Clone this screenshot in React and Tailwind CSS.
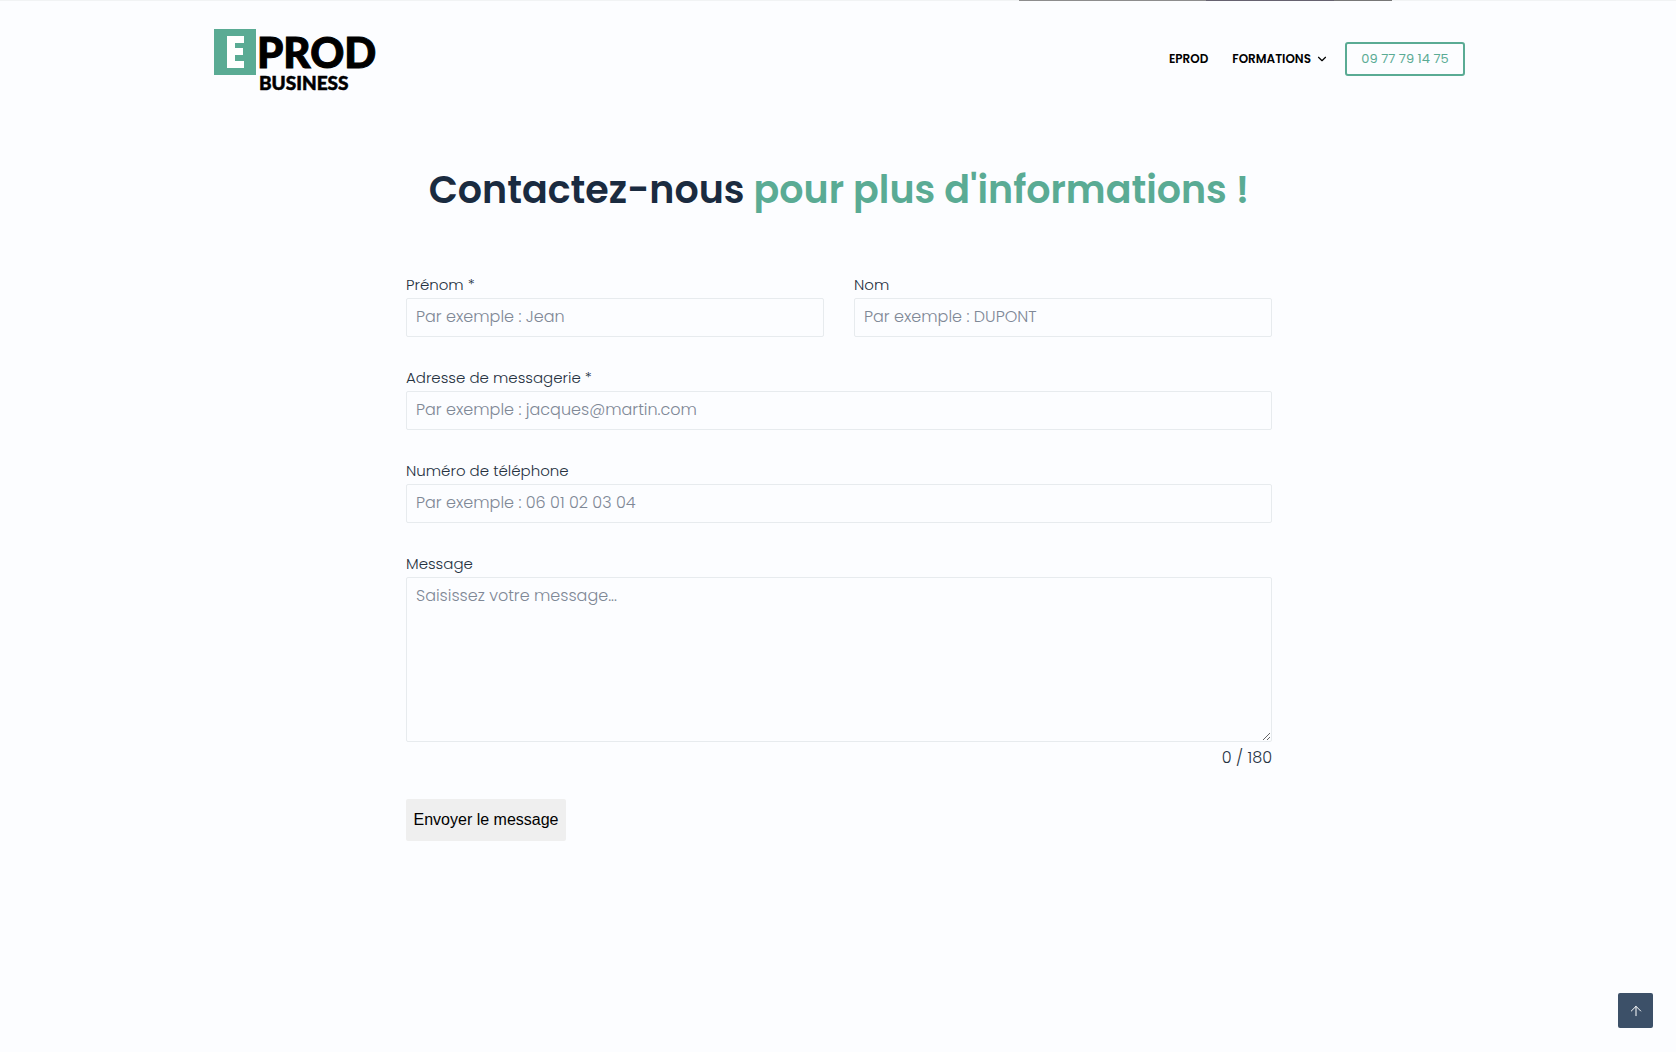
import React, { useState } from 'react';
import { ArrowUp, ChevronDown } from 'lucide-react';

const MAX_LENGTH = 180;

const fieldClass =
  'block w-full rounded-xs border border-[#e7ebee] bg-transparent px-[9px] text-base font-light text-[#45525f] placeholder:text-[#7f8896] focus:outline-none focus:border-[#5aab94]';

const Logo = () => (
  <svg width="176" height="68" viewBox="0 0 176 68" role="img" aria-label="EPROD Business">
    <rect x="0" y="0" width="42" height="46" fill="#5aab94" />
    <path d="M13 7h17v7h-9v5h8v7h-8v6h9v7H13z" fill="#fff" />
    <g fill="#000" stroke="#000" fontFamily="Lato, sans-serif" fontWeight="900">
      <text x="43" y="39" fontSize="42" strokeWidth="1">PROD</text>
      <text x="45" y="61" fontSize="19" strokeWidth="0.5">BUSINESS</text>
    </g>
  </svg>
);

const Field = ({ id, label, children }) => (
  <div className="min-w-0 flex-1">
    <label htmlFor={id} className="block h-[21px] text-[15px] leading-4 font-light text-[#26323f]">
      {label}
    </label>
    {children}
  </div>
);

const Header = () => (
  <header className="mx-auto flex h-[92px] w-full max-w-[1252px] items-start justify-between pt-7 pl-px">
    <a href="#accueil">
      <Logo />
    </a>
    <nav className="flex items-center pt-[13px] text-xs font-semibold text-black">
      <a href="#eprod">EPROD</a>
      <button type="button" className="ml-6 flex items-center gap-1">
        FORMATIONS
        <ChevronDown size={14} strokeWidth={2} />
      </button>
      <a
        href="tel:0977791475"
        className="ml-4 flex h-[34px] w-[120px] items-center justify-center rounded-[3px] border-2 border-[#5aab94] text-[13px] font-normal text-[#5aab94]"
      >
        09 77 79 14 75
      </a>
    </nav>
  </header>
);

const ContactForm = () => {
  const [message, setMessage] = useState('');

  return (
    <form
      className="mx-auto mt-[62px] flex w-full max-w-[866px] flex-col gap-[33px]"
      onSubmit={(e) => e.preventDefault()}
    >
      <div className="flex gap-[30px]">
        <Field id="prenom" label="Prénom *">
          <input id="prenom" type="text" required placeholder="Par exemple : Jean" className={`${fieldClass} h-[39px] pb-0.5`} />
        </Field>
        <Field id="nom" label="Nom">
          <input id="nom" type="text" placeholder="Par exemple : DUPONT" className={`${fieldClass} h-[39px] pb-0.5`} />
        </Field>
      </div>

      <Field id="email" label="Adresse de messagerie *">
        <input id="email" type="email" required placeholder="Par exemple : jacques@martin.com" className={`${fieldClass} h-[39px] pb-0.5`} />
      </Field>

      <Field id="telephone" label="Numéro de téléphone">
        <input id="telephone" type="tel" placeholder="Par exemple : 06 01 02 03 04" className={`${fieldClass} h-[39px] pb-0.5`} />
      </Field>

      <div>
        <Field id="message" label="Message">
          <textarea
            id="message"
            maxLength={MAX_LENGTH}
            value={message}
            onChange={(e) => setMessage(e.target.value)}
            placeholder="Saisissez votre message..."
            className={`${fieldClass} h-[165px] resize-y py-1.5`}
          />
        </Field>
        <p className="mt-2 text-right text-base leading-4 font-light text-[#26323f]">
          {message.length} / {MAX_LENGTH}
        </p>
      </div>

      <button
        type="submit"
        className="h-[42px] w-[160px] self-start rounded-xs bg-[#efefef] font-['Liberation_Sans',sans-serif] text-base text-black"
      >
        Envoyer le message
      </button>
    </form>
  );
};

const App = () => {
  return (
    <div className="min-h-screen bg-[#fcfdff] font-[Poppins,Inter,sans-serif]">
      <div className="grid h-px grid-cols-[1019fr_187fr_128fr_58fr_284fr] bg-[#f1f3f4]">
        <div />
        <div className="bg-[#8d8d8d]" />
        <div className="bg-[#666270]" />
        <div className="bg-[#777777]" />
      </div>

      <div className="pl-0.5">
        <Header />

        <main className="pb-16">
          <h1 className="mt-[72px] text-center text-[38px] leading-[50px] font-semibold text-[#1a2b40]">
            Contactez-nous <span className="text-[#5aab94]">pour plus d'informations !</span>
          </h1>
          <ContactForm />
        </main>
      </div>

      <button
        type="button"
        aria-label="Retour en haut"
        className="fixed right-[23px] bottom-6 flex h-[35px] w-[35px] items-center justify-center rounded-xs bg-[#3c5068] text-white"
      >
        <ArrowUp size={16} strokeWidth={1.5} />
      </button>
    </div>
  );
};

export default App;
